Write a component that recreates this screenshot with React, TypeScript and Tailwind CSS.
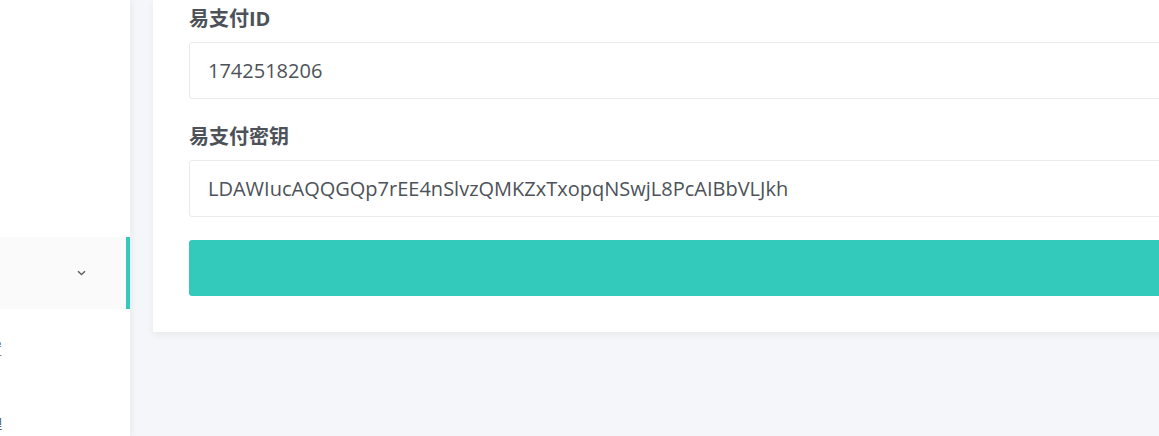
import React from "react";

const fontStack = '"Open Sans", "Noto Sans CJK SC", sans-serif';

const App: React.FC = () => {
  return (
    <div
      className="flex h-[436px] w-[1159px] overflow-hidden bg-[#f5f6fa]"
      style={{ fontFamily: fontStack }}
    >
      {/* Sidebar */}
      <aside className="relative z-10 flex w-[130px] shrink-0 flex-col overflow-hidden bg-white pt-[237px] shadow-[2px_0_6px_rgba(0,0,0,0.05)]">
        <div className="flex h-[72px] items-center justify-end border-r-4 border-[#33cabb] bg-[#fafafa] pr-[40px]">
          <svg width="9" height="6" viewBox="0 0 9 6" fill="none">
            <path d="M1 1.2L4.5 4.5L8 1.2" stroke="#5a5f66" strokeWidth="1.4" />
          </svg>
        </div>
        <div className="-ml-[41px] mt-[30px] w-[43px] text-right text-[14px] leading-[20px] text-[#4d5259]">
          设置
        </div>
        <div className="-ml-[41px] mt-[55px] w-[43px] text-right text-[14px] leading-[20px] text-[#4d5259]">
          管理
        </div>
      </aside>

      {/* Main */}
      <main className="flex-1 overflow-hidden pl-[23px]">
        <div className="w-[1100px] bg-white px-[36px] pb-[36px] pt-1 shadow-[0_3px_8px_rgba(0,0,0,0.05)]">
          <div className="mb-[23px]">
            <label className="mb-2 block h-[30px] text-[20px] font-bold leading-[30px] text-[#4d5259]">
              易支付ID
            </label>
            <div className="flex h-[57px] items-center rounded-[3px] border border-[#ebebeb] px-[18px] text-[20px] text-[#4d5259]">
              1742518206
            </div>
          </div>
          <div className="mb-[23px]">
            <label className="mb-2 block h-[30px] text-[20px] font-bold leading-[30px] text-[#4d5259]">
              易支付密钥
            </label>
            <div className="flex h-[57px] items-center rounded-[3px] border border-[#ebebeb] px-[18px] text-[20px] text-[#4d5259]">
              LDAWIucAQQGQp7rEE4nSlvzQMKZxTxopqNSwjL8PcAIBbVLJkh
            </div>
          </div>
          <button
            type="button"
            className="block h-[56px] w-full rounded-[3px] bg-[#33cabb]"
          />
        </div>
      </main>
    </div>
  );
};

export default App;
